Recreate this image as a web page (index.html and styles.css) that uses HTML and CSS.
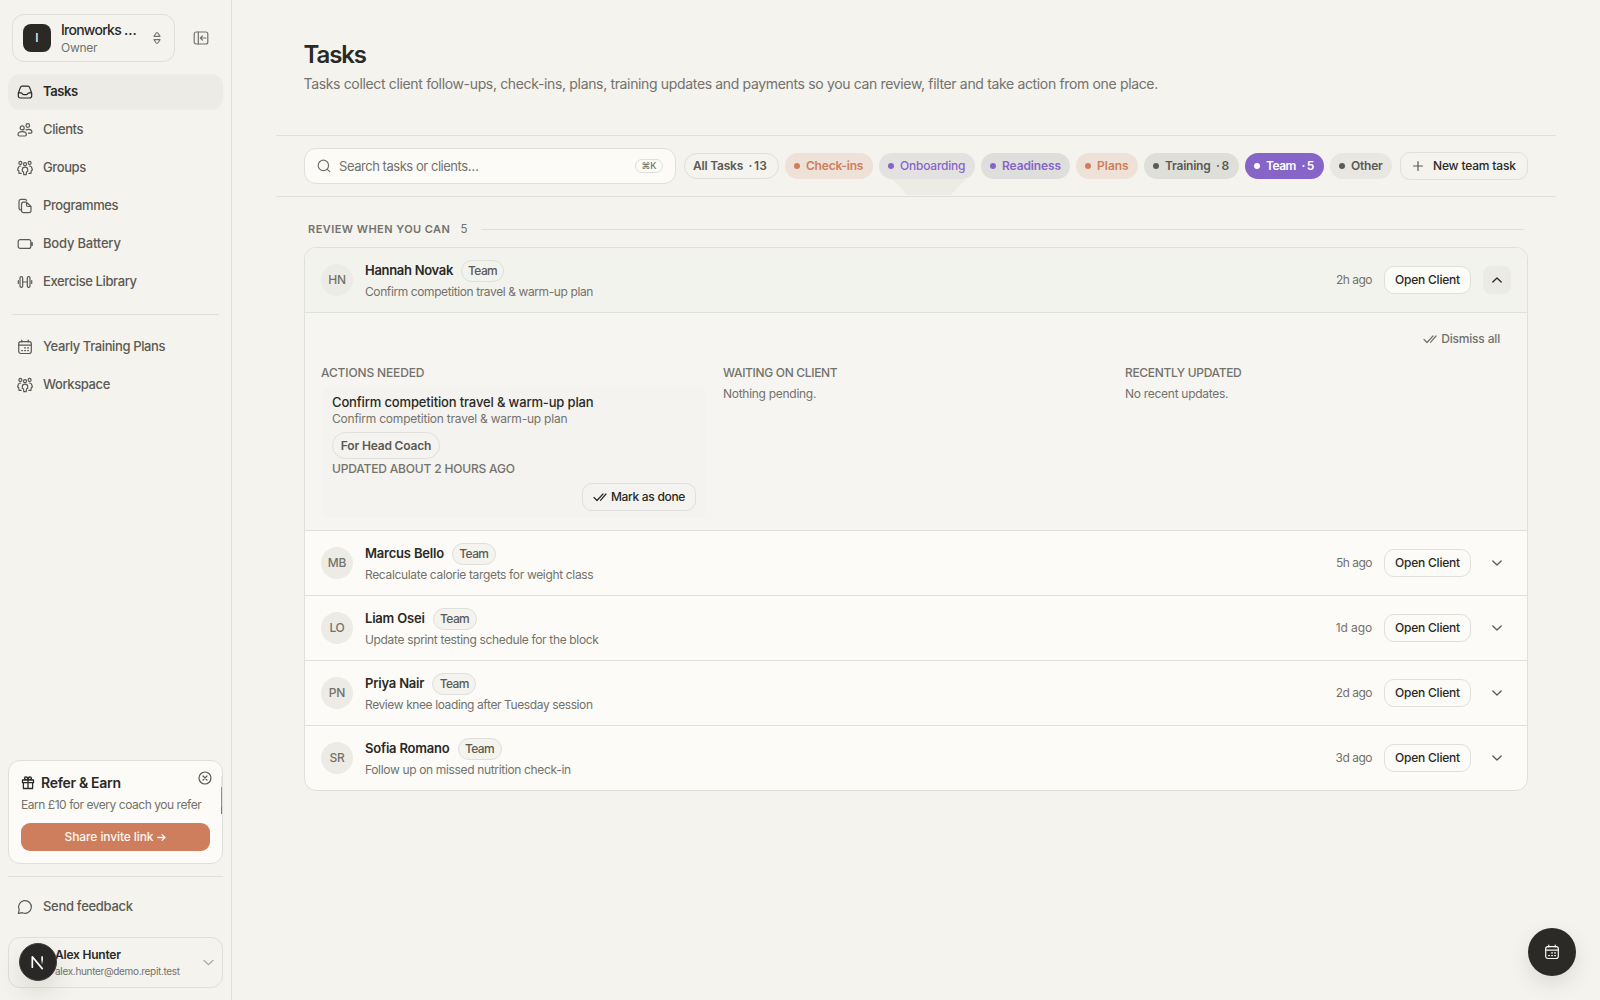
FILE: index.html
```
<!DOCTYPE html>
<html lang="en">
<head>
<meta charset="utf-8">
<title>Tasks</title>
<link rel="stylesheet" href="styles.css">
</head>
<body>
<svg class="sprite" aria-hidden="true">
  <symbol id="inbox" viewBox="0 0 16 16"><path d="M1.3 9.2 3.3 3.6Q3.8 2.2 5.2 2.2h5.6q1.4 0 1.9 1.4l2 5.6v2.6q0 2.2-2.2 2.2H3.5q-2.2 0-2.2-2.2zM1.3 8.8h2.6q.8 0 1.2.8.5 1 1.4 1h3q.9 0 1.4-1 .4-.8 1.2-.8h2.6"/></symbol>
  <symbol id="clients" viewBox="0 0 16 16"><circle cx="5.2" cy="5.9" r="2"/><circle cx="10.8" cy="3.5" r="1.8"/><path d="M1 12.600q0-2.900 4.200-2.900t4.200 2.900q0 1.400-1.400 1.400H2.400Q1 14 1 12.600zM9 7.900q1-.6 2.300-.6 3.600 0 3.600 2.600 0 1.300-1.300 1.300h-2.200"/></symbol>
  <symbol id="groups" viewBox="0 0 16 16"><circle cx="3.400" cy="2.900" r="1.500"/><circle cx="12.600" cy="2.900" r="1.500"/><circle cx="8" cy="4.200" r="1.500"/><path d="M5.300 9.700q0-2.600 2.700-2.600t2.700 2.600v1.600l-1.200.7-.3 2.700H6.800l-.3-2.700-1.200-.7zM3.600 6Q1.200 6.200 1 8.700l-.4 1.200 1.100.8.400 2.700h2M12.400 6q2.400.2 2.600 2.700l.4 1.200-1.100.8-.4 2.700h-2"/></symbol>
  <symbol id="copy" viewBox="0 0 16 16"><path d="M4.300 12Q2 12 2 9.800V3.600Q2 1.400 4.200 1.400h3.600q1 0 1.800 1"/><path d="M4.500 6.300q0-2.100 2.100-2.100h2.900L14 8.500v4q0 2.100-2.100 2.100H6.600q-2.100 0-2.100-2.100zM9.500 4.300V7q0 1.500 1.500 1.500h2.900"/></symbol>
  <symbol id="battery" viewBox="0 0 16 16"><rect x="1.200" y="3.600" width="12.600" height="8.800" rx="2"/><path d="M15 6.800v2.400" stroke-width="1.700"/></symbol>
  <symbol id="dumbbell" viewBox="0 0 16 16"><rect x="3" y="2.700" width="2.700" height="10.600" rx="1.300"/><rect x="10.300" y="2.700" width="2.700" height="10.600" rx="1.300"/><path d="M5.700 8h4.600M1.300 6.500v3M14.700 6.500v3"/></symbol>
  <symbol id="calendar" viewBox="0 0 16 16"><rect x="1.700" y="2.600" width="12.600" height="11.900" rx="2.200"/><path d="M1.700 6.200h12.600M4.800 1v2M11.200 1v2"/><path d="M7.700 8.900h.7M10.700 8.900h.7M4.700 11.600h.7M7.700 11.600h.7M10.700 11.600h.7" stroke-width="1.400"/></symbol>
  <symbol id="chat" viewBox="0 0 16 16"><path d="M1.400 14.300 2.200 10.600A6.400 6.300 0 1 1 5.400 13.700z"/></symbol>
  <symbol id="gift" viewBox="0 0 14 14"><path d="M1.500 4h11v2.700h-11zM2.400 6.700h9.200v5.800H2.400zM7 4v8.500M7 4Q3.600 4 3.600 2.300T5.300 1Q6.700 1.200 7 4q.3-2.800 1.700-3 1.700-.2 1.700 1.300T7 4"/></symbol>
  <symbol id="close" viewBox="0 0 14 14"><circle cx="7" cy="7" r="6"/><path d="m5 5 4 4m0-4-4 4"/></symbol>
  <symbol id="sort" viewBox="0 0 10 14"><path d="M5 1.500Q5.700 1.500 8 5.300H2Q4.300 1.500 5 1.500zM5 12.500q.7 0 3-3.800H2q2.300 3.800 3 3.800z"/></symbol>
  <symbol id="panel" viewBox="0 0 16 14"><rect x="1.200" y="1" width="13.600" height="12" rx="2"/><path d="M5.300 1v12M13 7H7.500m2-2.200L7.300 7l2.200 2.200"/></symbol>
  <symbol id="search" viewBox="0 0 14 14"><circle cx="6.400" cy="6.400" r="5.200"/><path d="m10.300 10.300 2.400 2.400"/></symbol>
  <symbol id="plus" viewBox="0 0 12 12"><path d="M6 1.500v9M1.500 6h9"/></symbol>
  <symbol id="down" viewBox="0 0 12 12"><path d="m1.800 4 4.200 4 4.200-4"/></symbol>
  <symbol id="up" viewBox="0 0 12 12"><path d="m1.800 8 4.200-4 4.200 4"/></symbol>
  <symbol id="checks" viewBox="0 0 14 12"><path d="m1 6.500 3 3 6-6.500M7.500 9.300 13 3"/></symbol>
  <symbol id="arrow" viewBox="0 0 10 10"><path d="M.8 5h8M5.600 1.800 8.900 5 5.600 8.200"/></symbol>
</svg>

<div class="app">
  <aside class="sidebar">
    <div class="top">
      <div class="workspace">
        <span class="logo">I</span>
        <div class="ws-text"><div class="ws-name">Ironworks …</div><div class="ws-role">Owner</div></div>
        <svg class="i-sort"><use href="#sort"/></svg>
      </div>
      <svg class="i-panel"><use href="#panel"/></svg>
    </div>
    <nav class="nav first">
      <a class="item active"><svg><use href="#inbox"/></svg>Tasks</a>
      <a class="item"><svg><use href="#clients"/></svg>Clients</a>
      <a class="item"><svg><use href="#groups"/></svg>Groups</a>
      <a class="item"><svg><use href="#copy"/></svg>Programmes</a>
      <a class="item body-battery"><svg><use href="#battery"/></svg>Body Battery</a>
      <a class="item"><svg><use href="#dumbbell"/></svg>Exercise Library</a>
    </nav>
    <nav class="nav second">
      <a class="item"><svg><use href="#calendar"/></svg>Yearly Training Plans</a>
      <a class="item"><svg><use href="#groups"/></svg>Workspace</a>
    </nav>
    <div class="refer">
      <div class="refer-title"><svg><use href="#gift"/></svg>Refer &amp; Earn</div>
      <svg class="refer-close"><use href="#close"/></svg>
      <p>Earn £10 for every coach you refer</p>
      <button class="share">Share invite link <svg><use href="#arrow"/></svg></button>
    </div>
    <div class="feedback"><a class="item"><svg><use href="#chat"/></svg>Send feedback</a></div>
    <div class="user">
      <div class="user-text"><div class="user-name">Alex Hunter</div><div class="user-mail">alex.hunter@demo.repit.test</div></div>
      <svg class="user-chev"><use href="#down"/></svg>
      <span class="badge-n"><svg viewBox="0 0 38 38"><defs><linearGradient id="fade" x1="0" y1="0" x2="0" y2="1"><stop offset=".4" stop-color="#fff"/><stop offset="1" stop-color="#fff" stop-opacity="0"/></linearGradient></defs><path d="M13 24.500V13.500L23.500 26" fill="none" stroke="#fff" stroke-width="1.800"/><rect x="22.500" y="13" width="1.700" height="9" fill="url(#fade)" stroke="none"/></svg></span>
    </div>
  </aside>

  <main class="main">
    <header class="head">
      <h1>Tasks</h1>
      <p>Tasks collect client follow-ups, check-ins, plans, training updates and payments so you can review, filter and take action from one place.</p>
    </header>
    <div class="toolbar">
      <div class="search"><svg><use href="#search"/></svg><span>Search tasks or clients…</span><kbd>⌘K</kbd></div>
      <div class="chips">
        <span class="chip all">All Tasks<b>·<u>13</u></b></span>
        <span class="chip orange checkins"><i></i>Check-ins</span>
        <span class="chip violet onboarding"><i></i>Onboarding</span>
        <span class="chip violet readiness"><i></i>Readiness</span>
        <span class="chip orange plans"><i></i>Plans</span>
        <span class="chip training"><i></i>Training<b>·<u>8</u></b></span>
        <span class="chip team"><i></i>Team<b>·<u>5</u></b></span>
        <span class="chip other"><i></i>Other</span>
      </div>
      <button class="new"><svg><use href="#plus"/></svg>New team task</button>
    </div>
    <section class="content">
      <div class="group-head"><h2>REVIEW WHEN YOU CAN</h2><span>5</span><hr></div>
      <div class="list">
        <div class="row open">
          <span class="avatar">HN</span>
          <div class="who"><div class="name"><strong class="n1">Hannah Novak</strong><em>Team</em></div><div class="sub s1">Confirm competition travel &amp; warm-up plan</div></div>
          <time>2h ago</time><button class="btn">Open Client</button><span class="toggle"><svg><use href="#up"/></svg></span>
        </div>
        <div class="panel">
          <div class="dismiss"><svg><use href="#checks"/></svg>Dismiss all</div>
          <div class="cols">
            <div class="col">
              <h3 class="h1">ACTIONS NEEDED</h3>
              <div class="task">
                <div class="task-title">Confirm competition travel &amp; warm-up plan</div>
                <div class="task-sub">Confirm competition travel &amp; warm-up plan</div>
                <span class="for">For Head Coach</span>
                <div class="updated">UPDATED ABOUT 2 HOURS AGO</div>
                <button class="btn done"><svg><use href="#checks"/></svg>Mark as done</button>
              </div>
            </div>
            <div class="col"><h3>WAITING ON CLIENT</h3><p>Nothing pending.</p></div>
            <div class="col"><h3>RECENTLY UPDATED</h3><p>No recent updates.</p></div>
          </div>
        </div>
        <div class="row">
          <span class="avatar">MB</span>
          <div class="who"><div class="name"><strong>Marcus Bello</strong><em>Team</em></div><div class="sub">Recalculate calorie targets for weight class</div></div>
          <time>5h ago</time><button class="btn">Open Client</button><span class="toggle"><svg><use href="#down"/></svg></span>
        </div>
        <div class="row">
          <span class="avatar">LO</span>
          <div class="who"><div class="name"><strong>Liam Osei</strong><em>Team</em></div><div class="sub">Update sprint testing schedule for the block</div></div>
          <time class="t1">1d ago</time><button class="btn">Open Client</button><span class="toggle"><svg><use href="#down"/></svg></span>
        </div>
        <div class="row">
          <span class="avatar">PN</span>
          <div class="who"><div class="name"><strong>Priya Nair</strong><em>Team</em></div><div class="sub s1">Review knee loading after Tuesday session</div></div>
          <time>2d ago</time><button class="btn">Open Client</button><span class="toggle"><svg><use href="#down"/></svg></span>
        </div>
        <div class="row">
          <span class="avatar">SR</span>
          <div class="who"><div class="name"><strong>Sofia Romano</strong><em>Team</em></div><div class="sub">Follow up on missed nutrition check-in</div></div>
          <time>3d ago</time><button class="btn">Open Client</button><span class="toggle"><svg><use href="#down"/></svg></span>
        </div>
      </div>
    </section>
  </main>
  <button class="fab"><svg><use href="#calendar"/></svg></button>
</div>
</body>
</html>
```
FILE: styles.css
```
* { box-sizing: border-box; margin: 0; padding: 0; }
:root { --bg: #f4f3ee; --card: #fcfbf7; --line: #dfdfdb; --ink: #2a2926; --mid: #5b5a54; --soft: #73726c; --orange: #ce7e5d; --violet: #8764c8; }
body { height: 1000px; background: var(--bg); color: var(--ink); font-family: Inter, "Liberation Sans", sans-serif; font-size: 12px; line-height: 16px; overflow: hidden; }
button { font: inherit; color: inherit; background: none; border: 0; }
svg { display: block; flex: none; fill: none; stroke: currentColor; stroke-width: 1.2; stroke-linecap: round; stroke-linejoin: round; }
.sprite { position: absolute; width: 0; height: 0; }
.app { display: flex; height: 1000px; }

/* Sidebar */
.sidebar { display: flex; flex-direction: column; width: 232px; flex: none; padding: 14px 8px 12px; border-right: 1px solid var(--line); }
.top { display: flex; align-items: center; padding-left: 4px; margin-bottom: 12px; }
.workspace { display: flex; align-items: center; width: 163px; height: 48px; padding: 0 12px 0 10px; border: 1px solid var(--line); border-radius: 12px; }
.logo { display: grid; place-items: center; width: 28px; height: 28px; border-radius: 8px; background: var(--ink); color: var(--bg); font-weight: 500; }
.ws-text { flex: 1; padding-left: 10px; white-space: nowrap; }
.ws-name { margin-top: -1px; font-size: 14px; line-height: 19px; font-weight: 500; letter-spacing: -.75px; }
.ws-role { line-height: 17px; letter-spacing: -.3px; color: var(--soft); }
.i-sort { width: 10px; height: 14px; color: var(--soft); }
.i-panel { width: 16px; height: 14px; margin-left: 18px; color: var(--soft); }
.nav { display: flex; flex-direction: column; gap: 2px; }
.item { display: flex; align-items: center; gap: 10px; height: 36px; padding-left: 9px; border-radius: 12px; font-size: 13px; font-weight: 500; letter-spacing: -.39px; color: var(--mid); }
.item svg { width: 16px; height: 16px; }
.first .item, .feedback .item { padding-bottom: 2px; }
.item svg { margin-top: 2px; }
.item.active { background: #ecebe6; color: var(--ink); font-weight: 600; }
.body-battery { letter-spacing: -.2px; }
.second { margin-top: 14px; padding-top: 14px; position: relative; }
.second::before { content: ""; position: absolute; left: 4px; right: 4px; top: 0; height: 1px; background: var(--line); }
.refer { position: relative; margin-top: auto; height: 104px; padding: 13px 12px 0; border: 1px solid var(--line); border-radius: 12px; background: var(--card); }
.refer::after { content: ""; position: absolute; right: 0; top: 15px; width: 1px; height: 38px; background: linear-gradient(#eee2d8 0 11px, var(--orange) 11px 31px, var(--violet) 31px); }
.refer-title { display: flex; align-items: center; gap: 6px; height: 18px; font-size: 14px; font-weight: 600; letter-spacing: -.3px; }
.refer-title svg { width: 14px; height: 14px; stroke-width: 1.3; }
.refer-close { position: absolute; right: 10px; top: 10px; width: 14px; height: 14px; color: var(--mid); }
.refer p { margin-top: 5px; letter-spacing: -.46px; color: var(--soft); white-space: nowrap; }
.share { display: flex; align-items: center; justify-content: center; gap: 4px; width: 189px; height: 28px; margin-top: 10px; border-radius: 9px; background: var(--orange); color: #fff8f1; font-weight: 500; letter-spacing: -.1px; }
.share svg { width: 9px; height: 9px; stroke-width: 1.4; }
.feedback { margin-top: 12px; padding-top: 12px; border-top: 1px solid var(--line); height: 61px; }
.feedback .item { letter-spacing: -.3px; }
.user { position: relative; display: flex; align-items: center; height: 51px; padding: 0 7px 2px 46px; border: 1px solid var(--line); border-radius: 12px; }
.user-text { flex: 1; }
.user-name { font-weight: 600; letter-spacing: -.22px; line-height: 18px; }
.user-mail { font-size: 10px; line-height: 14px; letter-spacing: -.32px; color: var(--soft); }
.user-chev { width: 13px; height: 13px; margin-top: 2px; color: #a09e98; stroke-width: 1; }
.badge-n { position: absolute; left: 10px; top: 5px; width: 38px; height: 38px; border-radius: 50%; background: #292826; border: 1px solid #42413f; box-shadow: 0 0 0 1px #2b2a28 inset, 0 12px 24px rgba(60, 50, 30, .12); }

/* Header and toolbar */
.main { flex: 1; padding: 0 44px; }
.head { height: 135px; padding: 39px 28px 0 27.500px; }
.head h1 { font-size: 24px; line-height: 32px; font-weight: 600; letter-spacing: -1.1px; }
.head p { margin-top: 3px; font-size: 14px; line-height: 20px; letter-spacing: -.344px; color: var(--soft); white-space: nowrap; }
.toolbar { display: flex; align-items: center; height: 62px; padding: 0 28px; border-top: 1px solid var(--line); border-bottom: 1px solid var(--line); }
.search { display: flex; align-items: center; width: 372px; height: 36px; padding: 0 12px; border: 1px solid var(--line); border-radius: 12px; background: var(--card); color: var(--soft); font-size: 13px; letter-spacing: -.46px; }
.search svg { width: 14px; height: 14px; margin-right: 8px; }
.search kbd { display: grid; place-items: center; width: 28px; height: 14px; margin-left: auto; border: 1px solid var(--line); border-radius: 8px; font: 500 9px/12px Inter, "DejaVu Sans", sans-serif; letter-spacing: 0; }
.chips { display: flex; gap: 6px; margin-left: 8px; }
.chip { position: relative; display: flex; align-items: center; height: 26px; padding-left: 9px; border-radius: 13px; background: #dfdfda; color: var(--mid); font-weight: 600; letter-spacing: -.22px; white-space: nowrap; }
.chip i { width: 6px; height: 6px; margin-right: 6px; border-radius: 50%; background: currentColor; }
.chip b { display: flex; gap: 1.500px; margin-left: 5.500px; font-weight: 600; letter-spacing: .1px; }
.chip u { text-decoration: none; }
.all { width: 95px; padding-left: 8px; border: 1px solid var(--line); background: none; }
.orange { background: #eee1d7; color: var(--orange); }
.violet { background: #e3e2e1; color: var(--violet); }
.checkins { width: 88px; }
.onboarding { width: 96px; font-weight: 500; }
.onboarding::after { content: ""; position: absolute; left: 13px; top: 26px; width: 74px; height: 16px; background: #ecebe4; clip-path: polygon(0 0, 100% 0, 79% 100%, 21% 100%); }
.readiness { width: 89px; background: #dedfdd; letter-spacing: -.13px; }
.plans { width: 62px; letter-spacing: 0; }
.training { width: 95px; }
.team { width: 79px; background: var(--violet); color: #fff; letter-spacing: -.5px; }
.other { width: 62px; background: #e8e7e2; }
.new { display: flex; align-items: center; gap: 9px; width: 128px; height: 28px; margin-left: 8px; padding-left: 11px; border: 1px solid var(--line); border-radius: 10px; font-weight: 500; letter-spacing: -.17px; white-space: nowrap; }
.new svg { width: 12px; height: 12px; color: var(--mid); }

/* Task list */
.content { padding: 24px 28px 0; }
.group-head { display: flex; align-items: center; height: 16px; padding: 0 4px; color: var(--soft); }
.group-head h2 { font-size: 11px; font-weight: 600; letter-spacing: .46px; }
.group-head span { margin-left: 10px; width: 21px; font-size: 11.500px; }
.group-head hr { flex: 1; border: 0; height: 1px; background: var(--line); }
.list { margin-top: 10px; border: 1px solid var(--line); border-radius: 12px; background: var(--card); overflow: hidden; }
.row { display: flex; align-items: center; height: 65px; padding: 0 16px; border-bottom: 1px solid var(--line); }
.row:last-child { height: 64px; border-bottom: 0; }
.row.open { background: #f3f3ed; }
.avatar { display: grid; place-items: center; width: 32px; height: 32px; border-radius: 50%; background: #ecebe5; color: var(--soft); font-weight: 500; letter-spacing: -.2px; }
.who { flex: 1; padding-left: 12px; }
.name { display: flex; align-items: center; gap: 8px; height: 22px; }
.name strong { margin-top: -1px; font-size: 13px; font-weight: 600; letter-spacing: -.2px; }
.name .n1 { letter-spacing: -.3px; }
.name em { display: grid; place-items: center; width: 44px; height: 22px; border: 1px solid var(--line); border-radius: 11px; background: #f4f3ee; font-style: normal; font-weight: 500; letter-spacing: -.6px; color: var(--mid); }
.open em { background: none; width: 43px; }
.sub { margin: 1px 0 1px; line-height: 17px; letter-spacing: -.34px; color: var(--soft); }
.s1 { letter-spacing: -.4px; }
time { letter-spacing: -.5px; color: var(--soft); }
.t1 { letter-spacing: -.1px; }
.btn { height: 28px; width: 87px; margin-left: 12px; border: 1px solid var(--line); border-radius: 10px; background: var(--card); font-weight: 500; letter-spacing: -.23px; white-space: nowrap; }
.toggle { display: grid; place-items: center; width: 28px; height: 28px; margin-left: 12px; border-radius: 8px; color: var(--mid); }
.toggle svg { width: 12px; height: 12px; stroke-width: 1.3; }
.open .toggle { background: #ebeae5; color: var(--ink); }
.panel { height: 218px; padding: 12px 16px 0; border-bottom: 1px solid var(--line); background: #f6f5f1; }
.dismiss { display: flex; align-items: center; justify-content: flex-end; gap: 4px; height: 28px; padding-right: 11px; color: var(--soft); font-weight: 500; letter-spacing: -.18px; }
.dismiss svg, .done svg { width: 14px; height: 12px; }
.cols { display: grid; grid-template-columns: repeat(3, 386px); gap: 16px; margin-top: 12px; }
.col h3 { font-size: 12px; line-height: 16px; font-weight: 500; letter-spacing: -.33px; color: var(--soft); }
.col .h1 { letter-spacing: -.14px; }
.col p { margin-top: 5px; letter-spacing: -.28px; color: var(--soft); }
.task { display: flex; flex-direction: column; align-items: flex-start; height: 131px; margin-top: 6px; padding: 7px 11px 0; border-radius: 8px; background: #f4f3ef; }
.task-title { font-size: 13px; line-height: 17px; font-weight: 500; letter-spacing: -.15px; }
.task-sub { line-height: 15px; letter-spacing: -.22px; color: var(--soft); }
.for { display: grid; place-items: center; width: 108px; height: 27px; margin-top: 6px; border: 1px solid var(--line); border-radius: 14px; color: var(--mid); font-weight: 600; letter-spacing: -.18px; }
.updated { margin-top: 2px; color: var(--soft); font-weight: 500; letter-spacing: -.18px; }
.done { display: flex; align-items: center; justify-content: center; gap: 4px; width: 114px; align-self: flex-end; margin-top: 6px; background: none; letter-spacing: -.31px; }

.fab { position: absolute; left: 1528px; top: 928px; display: grid; place-items: center; width: 48px; height: 48px; border-radius: 50%; background: #2b2a27; color: #fcfaf6; box-shadow: 0 8px 20px rgba(60, 55, 40, .12); }
.fab svg { width: 16px; height: 16px; }
```
